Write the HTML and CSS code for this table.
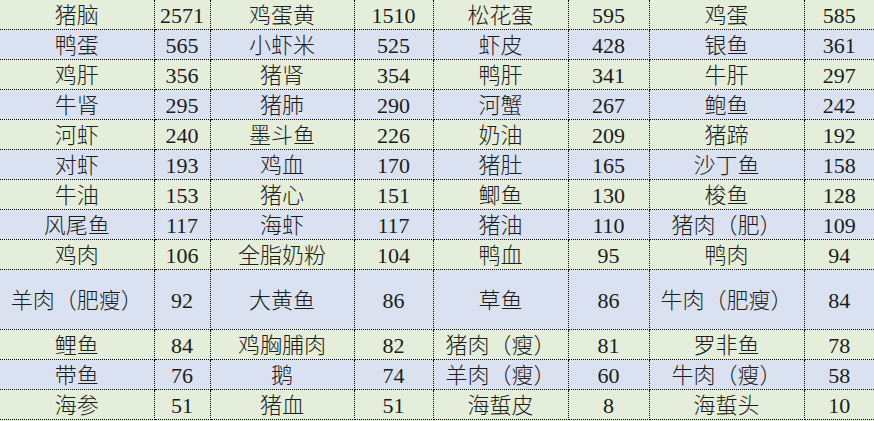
FILE: index.html
```html
<!DOCTYPE html>
<html lang="zh">
<head>
<meta charset="utf-8">
<title>食物胆固醇含量</title>
<link rel="stylesheet" href="styles.css">
</head>
<body>
<table class="sheet">
  <colgroup>
    <col class="c1"><col class="c2"><col class="c3"><col class="c4">
    <col class="c5"><col class="c6"><col class="c7"><col class="c8">
  </colgroup>
  <tbody>
    <tr class="g"><td>猪脑</td><td>2571</td><td>鸡蛋黄</td><td>1510</td><td>松花蛋</td><td>595</td><td>鸡蛋</td><td>585</td></tr>
    <tr class="b"><td>鸭蛋</td><td>565</td><td>小虾米</td><td>525</td><td>虾皮</td><td>428</td><td>银鱼</td><td>361</td></tr>
    <tr class="g"><td>鸡肝</td><td>356</td><td>猪肾</td><td>354</td><td>鸭肝</td><td>341</td><td>牛肝</td><td>297</td></tr>
    <tr class="b"><td>牛肾</td><td>295</td><td>猪肺</td><td>290</td><td>河蟹</td><td>267</td><td>鲍鱼</td><td>242</td></tr>
    <tr class="g"><td>河虾</td><td>240</td><td>墨斗鱼</td><td>226</td><td>奶油</td><td>209</td><td>猪蹄</td><td>192</td></tr>
    <tr class="b"><td>对虾</td><td>193</td><td>鸡血</td><td>170</td><td>猪肚</td><td>165</td><td>沙丁鱼</td><td>158</td></tr>
    <tr class="g"><td>牛油</td><td>153</td><td>猪心</td><td>151</td><td>鲫鱼</td><td>130</td><td>梭鱼</td><td>128</td></tr>
    <tr class="b"><td>风尾鱼</td><td>117</td><td>海虾</td><td>117</td><td>猪油</td><td>110</td><td>猪肉（肥）</td><td>109</td></tr>
    <tr class="g"><td>鸡肉</td><td>106</td><td>全脂奶粉</td><td>104</td><td>鸭血</td><td>95</td><td>鸭肉</td><td>94</td></tr>
    <tr class="b tall"><td>羊肉（肥瘦）</td><td>92</td><td>大黄鱼</td><td>86</td><td>草鱼</td><td>86</td><td>牛肉（肥瘦）</td><td>84</td></tr>
    <tr class="g"><td>鲤鱼</td><td>84</td><td>鸡胸脯肉</td><td>82</td><td>猪肉（瘦）</td><td>81</td><td>罗非鱼</td><td>78</td></tr>
    <tr class="b"><td>带鱼</td><td>76</td><td>鹅</td><td>74</td><td>羊肉（瘦）</td><td>60</td><td>牛肉（瘦）</td><td>58</td></tr>
    <tr class="g"><td>海参</td><td>51</td><td>猪血</td><td>51</td><td>海蜇皮</td><td>8</td><td>海蜇头</td><td>10</td></tr>
  </tbody>
</table>
</body>
</html>
```
FILE: styles.css
```css
html, body {
  margin: 0;
  padding: 0;
  background: #e4eedb;
  overflow: hidden;
}

.sheet {
  width: 874px;
  table-layout: fixed;
  border-collapse: collapse;
  font-family: "Liberation Serif", "Noto Sans CJK SC", serif;
  font-size: 22px;
  font-weight: 300;
  color: #1c1c1c;
}

.c1 { width: 154px; }
.c2 { width: 56px; }
.c3 { width: 144px; }
.c4 { width: 79px; }
.c5 { width: 135px; }
.c6 { width: 81px; }
.c7 { width: 155px; }
.c8 { width: 70px; }

.sheet td {
  height: 27px;
  padding: 2px 0 0;
  border: 1px dotted #000;
  text-align: center;
  vertical-align: middle;
  line-height: 26px;
  white-space: nowrap;
  overflow: hidden;
}

.sheet tr:first-child td { border-top: none; }
.sheet td:first-child { border-left: none; }
.sheet td:last-child { border-right: none; }

.sheet tr.tall td { height: 57px; }

.g { background: #e4eedb; }
.b { background: #dae2f2; }
```
